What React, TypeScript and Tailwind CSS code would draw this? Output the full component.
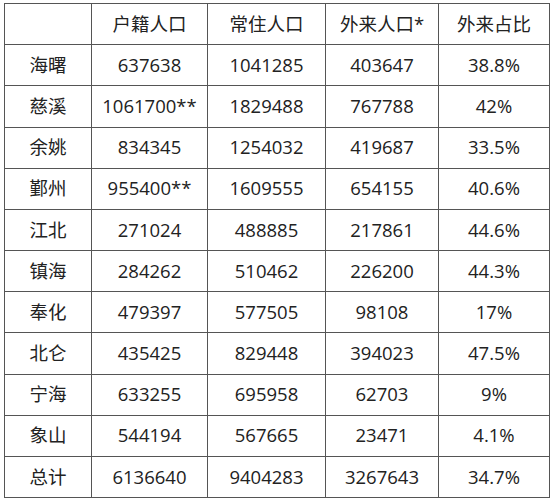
import React from "react";

const header = ["", "户籍人口", "常住人口", "外来人口*", "外来占比"];
const rows: string[][] = [
  ["海曙", "637638", "1041285", "403647", "38.8%"],
  ["慈溪", "1061700**", "1829488", "767788", "42%"],
  ["余姚", "834345", "1254032", "419687", "33.5%"],
  ["鄞州", "955400**", "1609555", "654155", "40.6%"],
  ["江北", "271024", "488885", "217861", "44.6%"],
  ["镇海", "284262", "510462", "226200", "44.3%"],
  ["奉化", "479397", "577505", "98108", "17%"],
  ["北仑", "435425", "829448", "394023", "47.5%"],
  ["宁海", "633255", "695958", "62703", "9%"],
  ["象山", "544194", "567665", "23471", "4.1%"],
  ["总计", "6136640", "9404283", "3267643", "34.7%"],
];

export default function App() {
  const all = [header, ...rows];
  return (
    <div className="w-[554px] h-[500px] bg-white pl-[4px] pt-[3px]">
      <div
        className="grid grid-cols-[86px_115px_117px_112px_110px] grid-rows-[repeat(12,1fr)] gap-px bg-[#555] p-px w-[546px] h-[495px] text-[18.5px] text-[#222]"
        style={{ fontFamily: '"Open Sans", "Noto Sans CJK SC", sans-serif' }}
      >
        {all.map((r, i) =>
          r.map((c, j) => (
            <div key={`${i}-${j}`} className="bg-white flex items-center justify-center leading-none">
              {c}
            </div>
          ))
        )}
      </div>
    </div>
  );
}
